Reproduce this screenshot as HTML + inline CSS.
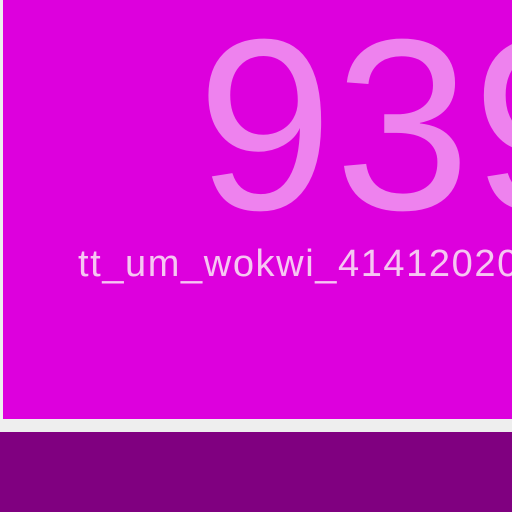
<!DOCTYPE html>
<html><head><style>
html,body{margin:0;padding:0;width:512px;height:512px;overflow:hidden;background:#eeeeee;position:relative;font-family:"Liberation Sans",sans-serif}
.a{position:absolute;left:3px;top:0;width:509px;height:419px;background:#dd00dd;overflow:hidden}
.b{position:absolute;left:0;top:432px;width:512px;height:80px;background:#800080}
.n{position:absolute;left:194px;top:3px;font-size:244px;line-height:244px;color:#ee82ee;white-space:nowrap;letter-spacing:2px}
.t{position:absolute;left:75px;top:242px;font-size:38px;line-height:44px;color:#f6c6f2;white-space:nowrap;letter-spacing:1.6px}
</style></head><body>
<div class="a"><div class="n">939</div><div class="t">tt_um_wokwi_414120207</div></div>
<div class="b"></div>
</body></html>
